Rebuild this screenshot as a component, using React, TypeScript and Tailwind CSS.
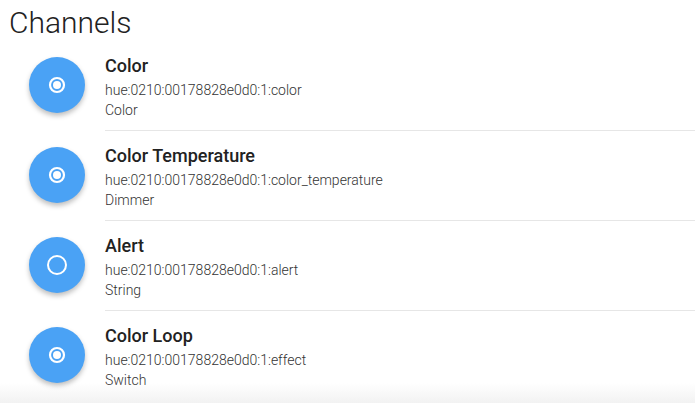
import React from 'react'

const channels = [
    { label: 'Color', uid: 'hue:0210:00178828e0d0:1:color', type: 'Color', checked: true },
    { label: 'Color Temperature', uid: 'hue:0210:00178828e0d0:1:color_temperature', type: 'Dimmer', checked: true },
    { label: 'Alert', uid: 'hue:0210:00178828e0d0:1:alert', type: 'String', checked: false },
    { label: 'Color Loop', uid: 'hue:0210:00178828e0d0:1:effect', type: 'Switch', checked: true },
]

const RadioIcon = ({ checked }: { checked: boolean }) => (
    checked ? (
        <svg width="20" height="20" viewBox="0 0 20 20">
            <circle cx="10" cy="10" r="7" fill="none" stroke="white" strokeWidth="2.2" />
            <circle cx="10" cy="10" r="4" fill="white" />
        </svg>
    ) : (
        <svg width="24" height="24" viewBox="0 0 24 24">
            <circle cx="12" cy="12" r="9" fill="none" stroke="white" strokeWidth="2" />
        </svg>
    )
)

const App = () => {
    return (
        <div className="relative h-[403px] overflow-hidden bg-white font-['Roboto',sans-serif]">
            <h1 className="pl-[9px] pt-[5px] text-[30px] font-light leading-[36px] text-[#222]">Channels</h1>
            <ul>
                {channels.map((c, i) => (
                    <li key={c.uid} className="flex h-[90px]">
                        <div className="flex w-[105px] shrink-0 items-center pl-[29px] pb-[2px]">
                            <div className="flex h-[56px] w-[56px] items-center justify-center rounded-full bg-[#4aa2f5] shadow-[0_3px_5px_rgba(0,0,0,0.25)]">
                                <RadioIcon checked={c.checked} />
                            </div>
                        </div>
                        <div className={`flex h-full flex-1 flex-col pt-[14px] ${i < channels.length - 1 ? 'border-b border-[#e6e6e6]' : ''}`}>
                            <div className="text-[18px] font-medium leading-[22px] text-[#222]">{c.label}</div>
                            <div className="mt-[3px] text-[14px] font-light leading-[20px] text-[#333]">{c.uid}</div>
                            <div className="text-[14px] font-light leading-[20px] text-[#333]">{c.type}</div>
                        </div>
                    </li>
                ))}
            </ul>
            <div className="absolute bottom-0 left-0 right-0 h-[20px] bg-gradient-to-b from-white/0 to-[#f2f2f2]" />
        </div>
    )
}

export default App
